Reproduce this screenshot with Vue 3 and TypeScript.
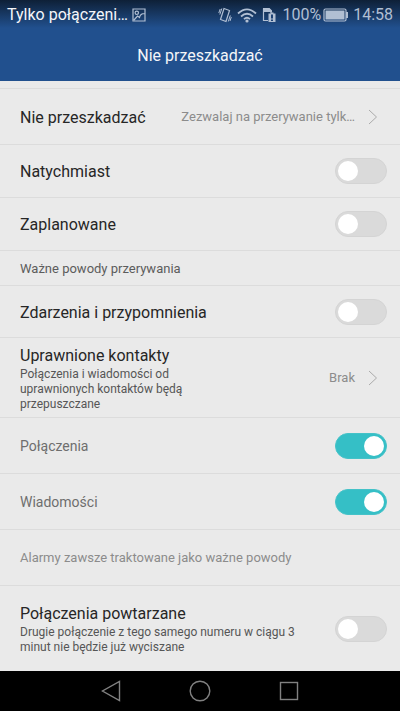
<script setup lang="ts">
import { reactive } from 'vue'

interface Row {
  id: string
  kind: 'link' | 'switch' | 'heading' | 'note'
  label: string
  size: string
  summary?: string
  value?: string
  minor?: boolean
}

const rows: Row[] = [
  { id: 'mode', kind: 'link', label: 'Nie przeszkadzać', value: 'Zezwalaj na przerywanie tylk…', size: 'tall' },
  { id: 'now', kind: 'switch', label: 'Natychmiast', size: 'medium' },
  { id: 'scheduled', kind: 'switch', label: 'Zaplanowane', size: 'medium' },
  { id: 'reasons', kind: 'heading', label: 'Ważne powody przerywania', size: 'short' },
  { id: 'events', kind: 'switch', label: 'Zdarzenia i przypomnienia', size: 'compact' },
  {
    id: 'contacts',
    kind: 'link',
    label: 'Uprawnione kontakty',
    summary: 'Połączenia i wiadomości od uprawnionych kontaktów będą przepuszczane',
    value: 'Brak',
    size: 'large',
  },
  { id: 'calls', kind: 'switch', label: 'Połączenia', minor: true, size: 'tall' },
  { id: 'messages', kind: 'switch', label: 'Wiadomości', minor: true, size: 'tall' },
  { id: 'alarms', kind: 'note', label: 'Alarmy zawsze traktowane jako ważne powody', size: 'tall' },
  {
    id: 'repeated',
    kind: 'switch',
    label: 'Połączenia powtarzane',
    summary: 'Drugie połączenie z tego samego numeru w ciągu 3 minut nie będzie już wyciszane',
    size: 'large',
  },
]

const enabled = reactive<Record<string, boolean>>({
  now: false,
  scheduled: false,
  events: false,
  calls: true,
  messages: true,
  repeated: false,
})
</script>

<template>
  <div class="screen">
    <header class="top">
      <div class="status">
        <span class="carrier">Tylko połączeni…</span>
        <svg class="picture" width="14" height="14" viewBox="0 0 14 14" aria-hidden="true">
          <path d="M1 1h12v12H1z M2 12L5.500 8l2 1.500C8 7 9.500 5.500 12.500 5.500" />
          <circle cx="4.800" cy="4.800" r="1.700" />
        </svg>
        <span class="spacer"></span>
        <svg class="vibrate" width="14" height="16" viewBox="0 0 14 16" aria-hidden="true">
          <path d="M6 1.500L11.500 3.500 8 14.500 2.500 12.500z" />
          <path class="thin" d="M3.800 1.500L1.800 7.500M2.200 2L.8 6M10.300 14.500l2-6M12 14l1.300-4" />
        </svg>
        <svg class="wifi" width="20" height="16" viewBox="0 0 20 16" aria-hidden="true">
          <path d="M1 6.500Q10-1.800 19 6.500M4 9.500Q10 4 16 9.500M7 12.200Q10 9.400 13 12.200" />
          <circle cx="10" cy="14" r="1.600" />
        </svg>
        <svg class="sim" width="14" height="16" viewBox="0 0 14 16" aria-hidden="true">
          <path d="M6 13.500H1.500V2H7l2 2v2" />
          <path class="fill" d="M1 1h6.500L10 3.500V5H1zM6.500 6.500H8.500V5.500h3v1h2v8.500h-7z" />
          <path class="mark" d="M10 7.500v4M10 12.500v1.500" />
        </svg>
        <span class="percent">100%</span>
        <svg class="battery" width="26" height="14" viewBox="0 0 26 14" aria-hidden="true">
          <rect class="case" x="1" y="1" width="22" height="12" rx="1.500" />
          <rect class="fill" x="2.500" y="2.500" width="19" height="9" />
          <rect class="fill" x="23" y="4" width="2" height="6" />
        </svg>
        <span class="clock">14:58</span>
      </div>
      <h1 class="title">Nie przeszkadzać</h1>
    </header>

    <main class="list">
      <template v-for="row in rows" :key="row.id">
        <h2 v-if="row.kind === 'heading'" class="row heading" :class="row.size">{{ row.label }}</h2>
        <p v-else-if="row.kind === 'note'" class="row note" :class="row.size">{{ row.label }}</p>
        <a v-else-if="row.kind === 'link'" class="row" :class="row.size" href="#">
          <span class="text" :class="{ narrow: row.summary }">
            <span class="label">{{ row.label }}</span>
            <span v-if="row.summary" class="summary">{{ row.summary }}</span>
          </span>
          <span class="value">{{ row.value }}</span>
          <svg class="chevron" width="10" height="16" viewBox="0 0 10 16" aria-hidden="true">
            <path d="M1 1l7.500 7L1 15" />
          </svg>
        </a>
        <label v-else class="row control" :class="[row.size, { minor: row.minor }]">
          <span class="text">
            <span class="label">{{ row.label }}</span>
            <span v-if="row.summary" class="summary">{{ row.summary }}</span>
          </span>
          <input v-model="enabled[row.id]" class="switch" type="checkbox" role="switch" />
        </label>
      </template>
    </main>

    <nav class="keys">
      <button type="button" aria-label="Wstecz">
        <svg width="22" height="22" viewBox="0 0 22 22"><path d="M19.500 1.500v19L2.500 11z" /></svg>
      </button>
      <button type="button" aria-label="Ekran główny">
        <svg width="22" height="22" viewBox="0 0 22 22"><circle cx="11" cy="11" r="9.800" /></svg>
      </button>
      <button type="button" aria-label="Ostatnie">
        <svg width="22" height="22" viewBox="0 0 22 22"><rect x="2.500" y="2.500" width="17" height="17" /></svg>
      </button>
    </nav>
  </div>
</template>

<style>
body {
  background: #eaeaea;
}
</style>

<style scoped>
.screen {
  display: flex;
  flex-direction: column;
  min-height: 100vh;
  background: #eaeaea;
  color: #262626;
  font-family: Roboto, "Noto Sans", sans-serif;
  font-size: 16px;
}

.top {
  background: linear-gradient(#0e2037 0, #21508e 28px);
  color: #f4f6f9;
}

.status {
  display: flex;
  align-items: center;
  height: 29px;
  padding: 0 7px;
  color: #b1bfd3;
  white-space: nowrap;
}

.carrier {
  color: #f4f6f9;
}

.spacer {
  flex: 1;
}

.status svg {
  flex: none;
  fill: none;
  stroke: #b1bfd3;
  stroke-width: 1.2;
}

.picture {
  margin-left: 4px;
}

.vibrate .thin {
  stroke-width: 1;
}

.wifi {
  margin-left: 5px;
}

.status .wifi {
  stroke-width: 1.8;
}

.wifi circle,
.status .fill {
  fill: #b1bfd3;
  stroke: none;
}

.sim {
  margin-left: 5px;
}

.sim .mark {
  stroke: #1d4275;
  stroke-width: 2;
}

.percent {
  margin-left: 6px;
}

.battery {
  margin-left: 2px;
}

.clock {
  margin-left: 4px;
}

.title {
  margin: 0;
  padding-top: 1px;
  font-size: 16px;
  font-weight: 400;
  line-height: 51px;
  text-align: center;
}

.list {
  flex: 1;
  padding-top: 7px;
}

.row {
  display: flex;
  align-items: center;
  box-sizing: border-box;
  margin: 0;
  padding: 0 13px 0 20px;
  border-top: 1px solid #dcdcdc;
  color: inherit;
  text-decoration: none;
}

.short {
  min-height: 35px;
}

.compact {
  min-height: 52px;
}

.medium {
  min-height: 53px;
}

.tall {
  min-height: 56px;
}

.large {
  min-height: 80px;
}

.control.large {
  min-height: 86px;
}

.heading {
  color: #5c5c5c;
  font-size: 13px;
  font-weight: 400;
}

.note {
  color: #8c8c8c;
  font-size: 13px;
}

.text {
  flex: 1;
  min-width: 0;
  padding-top: 2px;
}

.minor .text {
  padding-top: 0;
}

.narrow {
  flex: 0 1 180px;
}

.label {
  display: block;
  line-height: 20px;
}

.minor .label {
  color: #6e6e6e;
  font-size: 14px;
}

.summary {
  display: block;
  padding-top: 1px;
  color: #565656;
  font-size: 12px;
  line-height: 15px;
}

.value {
  margin-left: auto;
  color: #8c8c8c;
  font-size: 13px;
  white-space: nowrap;
}

.chevron {
  flex: none;
  margin: 0 9px 0 13px;
  fill: none;
  stroke: #ababab;
}

.switch {
  display: flex;
  flex: none;
  align-items: center;
  box-sizing: border-box;
  width: 52px;
  height: 26px;
  margin: 0 0 0 24px;
  padding: 0 2px;
  border: 1px solid #d4d4d4;
  border-radius: 13px;
  background: #dadada;
  appearance: none;
}

.switch::before {
  width: 20px;
  height: 20px;
  border-radius: 50%;
  background: #fff;
  content: "";
}

.switch:checked {
  justify-content: flex-end;
  border-color: #44c2c8;
  background: #35bfc6;
}

.keys {
  display: flex;
  justify-content: center;
  gap: 67px;
  height: 40px;
  background: #000;
}

.keys button {
  display: flex;
  align-items: center;
  padding: 0;
  border: 0;
  background: none;
}

.keys svg {
  fill: none;
  stroke: #818181;
  stroke-width: 1.4;
}
</style>
